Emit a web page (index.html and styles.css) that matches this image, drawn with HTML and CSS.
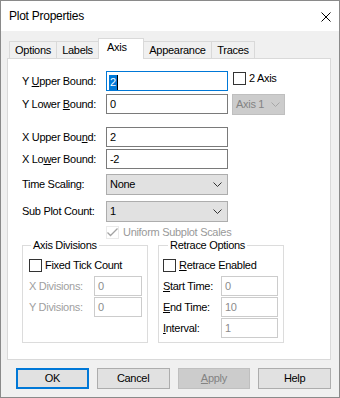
FILE: index.html
```html
<!DOCTYPE html>
<html lang="en">
<head>
  <meta charset="UTF-8">
  <meta name="viewport" content="width=device-width, initial-scale=1.0">
  <title>Plot Properties</title>
  <link rel="stylesheet" href="styles.css">
</head>
<body>
  <div class="window">
    <div class="titlebar">
      <span class="title">Plot Properties</span>
      <svg class="close" width="10" height="10" viewBox="0 0 10 10">
        <path d="M0.5 0.5 L9.5 9.5 M9.5 0.5 L0.5 9.5" stroke="#000" stroke-width="1" fill="none"/>
      </svg>
    </div>

    <div class="client">
      <div class="tabs">
        <div class="tab t-options">Options</div>
        <div class="tab t-labels">Labels</div>
        <div class="tab t-axis active">Axis</div>
        <div class="tab t-appearance">Appearance</div>
        <div class="tab t-traces">Traces</div>
      </div>

      <div class="panel">
        <div class="row">
          <span class="lbl">Y <u>U</u>pper Bound:</span>
          <div class="field focus"><span class="sel">2</span></div>
          <div class="check top"><span class="box"></span>2 Axis</div>
        </div>
        <div class="row r2">
          <span class="lbl">Y Lower <u>B</u>ound:</span>
          <div class="field">0</div>
          <div class="combo mini disabled">
            <span>Axis 1</span>
            <svg width="9" height="5" viewBox="0 0 9 5"><polyline points="0.5,0.5 4.5,4.5 8.5,0.5" fill="none" stroke="#a6a6a6"/></svg>
          </div>
        </div>
        <div class="row r3">
          <span class="lbl">X Upper Bou<u>n</u>d:</span>
          <div class="field">2</div>
        </div>
        <div class="row r4">
          <span class="lbl">X Lo<u>w</u>er Bound:</span>
          <div class="field">-2</div>
        </div>
        <div class="row r5">
          <span class="lbl">Time Scaling:</span>
          <div class="combo">
            <span>None</span>
            <svg width="9" height="5" viewBox="0 0 9 5"><polyline points="0.5,0.5 4.5,4.5 8.5,0.5" fill="none" stroke="#333"/></svg>
          </div>
        </div>
        <div class="row r6">
          <span class="lbl">Sub Plot Count:</span>
          <div class="combo">
            <span>1</span>
            <svg width="9" height="5" viewBox="0 0 9 5"><polyline points="0.5,0.5 4.5,4.5 8.5,0.5" fill="none" stroke="#333"/></svg>
          </div>
        </div>
        <div class="check uniform disabled">
          <span class="box">
            <svg width="13" height="13" viewBox="0 0 13 13"><polyline points="1.5,6.5 4.5,9.5 11.5,2.5" fill="none" stroke="#a3a3a3" stroke-width="1.3"/></svg>
          </span>Uniform Subplot Scales
        </div>

        <div class="groups">
          <fieldset class="group g-axis">
            <legend>Axis Divisions</legend>
            <div class="check"><span class="box"></span>Fixed Tick Count</div>
            <div class="grow first">
              <span class="glbl disabled">X Divisions:</span>
              <div class="field off">0</div>
            </div>
            <div class="grow">
              <span class="glbl disabled">Y Divisions:</span>
              <div class="field off">0</div>
            </div>
          </fieldset>
          <fieldset class="group g-retrace">
            <legend>Retrace Options</legend>
            <div class="check"><span class="box"></span><span><u>R</u>etrace Enabled</span></div>
            <div class="grow first">
              <span class="glbl"><u>S</u>tart Time:</span>
              <div class="field off">0</div>
            </div>
            <div class="grow">
              <span class="glbl"><u>E</u>nd Time:</span>
              <div class="field off">10</div>
            </div>
            <div class="grow">
              <span class="glbl"><u>I</u>nterval:</span>
              <div class="field off">1</div>
            </div>
          </fieldset>
        </div>
      </div>

      <div class="buttons">
        <div class="btn default">OK</div>
        <div class="btn">Cancel</div>
        <div class="btn disabled"><u>A</u>pply</div>
        <div class="btn">Help</div>
      </div>
    </div>
  </div>
</body>
</html>
```

FILE: styles.css
```css
* {
  box-sizing: border-box;
  margin: 0;
  padding: 0;
}

body {
  font-family: "Liberation Sans", Arial, sans-serif;
  font-size: 11px;
  line-height: 13px;
  letter-spacing: -0.3px;
  color: #000;
  background: #fff;
}

.window {
  width: 340px;
  height: 398px;
  border: 1px solid #8a8a8a;
  background: #f0f0f0;
}

/* title bar */
.titlebar {
  height: 30px;
  background: #fff;
  display: flex;
  align-items: center;
  justify-content: space-between;
  padding: 0 8px 0 8px;
}

.title {
  font-size: 12px;
  line-height: 14px;
  letter-spacing: -0.25px;
}

.close {
  display: block;
  margin-top: 1px;
}

.client {
  padding: 7px 8px 8px 6px;
}

/* tabs */
.tabs {
  display: flex;
  align-items: flex-end;
  height: 20px;
  margin-left: 2px;
}

.tab {
  height: 17px;
  border: 1px solid #d9d9d9;
  border-bottom: none;
  margin-right: -1px;
  padding-top: 2px;
  text-align: center;
  background: #f0f0f0;
}

.t-options { width: 48px; }
.t-labels { width: 43px; }
.t-axis { width: 46px; }
.t-appearance { width: 69px; }
.t-traces { width: 44px; }

.tab.active {
  height: 21px;
  margin-bottom: -1px;
  background: #fff;
  text-align: left;
  padding-left: 8px;
  position: relative;
  z-index: 1;
}

/* page */
.panel {
  height: 302px;
  background: #fff;
  border: 1px solid #d9d9d9;
  padding: 12px 0 0 14px;
}

.row {
  display: flex;
  align-items: center;
  height: 20px;
}

.r2 { margin-top: 3px; }
.r3 { margin-top: 13px; }
.r4 { margin-top: 2px; }
.r5 { margin-top: 5px; height: 21px; }
.r6 { margin-top: 6px; height: 21px; }

.lbl {
  width: 84px;
  flex: none;
}

.field {
  width: 122px;
  height: 20px;
  border: 1px solid #7a7a7a;
  background: #fff;
  padding-left: 3px;
  line-height: 18px;
  flex: none;
}

.field.focus {
  border-color: #0078d7;
  padding: 1px 0 0 2px;
}

.sel {
  display: inline-block;
  height: 15px;
  line-height: 15px;
  padding: 0 1px;
  background: #0078d7;
  color: #fff;
  border-right: 1px solid #000;
}

.field.off {
  border-color: #cccccc;
  color: #8c8c8c;
}

.combo {
  width: 122px;
  height: 21px;
  border: 1px solid #adadad;
  background: #e1e1e1;
  display: flex;
  align-items: center;
  justify-content: space-between;
  padding: 0 5px 0 3px;
  flex: none;
}

.combo svg {
  display: block;
}

.combo.mini {
  width: 53px;
  margin-left: 4px;
  padding-right: 4px;
}

.combo.disabled {
  background: #cccccc;
  border-color: #bfbfbf;
  color: #838383;
}

/* check boxes */
.check {
  display: flex;
  align-items: center;
  height: 13px;
}

.check .box {
  width: 13px;
  height: 13px;
  border: 1px solid #333;
  background: #fff;
  margin-right: 3px;
  flex: none;
  display: flex;
  align-items: center;
  justify-content: center;
}

.check.top {
  align-self: flex-start;
  margin: 1px 0 0 5px;
}

.check.uniform {
  margin: 4px 0 0 84px;
}

.check.uniform .box {
  border-color: #eaeaea;
  margin-right: 4px;
}

.check.uniform .box svg {
  display: block;
  margin: -1px;
}

.disabled {
  color: #a0a0a0;
}

.check.uniform.disabled {
  color: #999;
}

/* group boxes */
.groups {
  display: flex;
  gap: 10px;
}

.group {
  width: 126px;
  height: 104px;
  border: 1px solid #dcdcdc;
  padding: 0 0 0 6px;
}

.group legend {
  padding: 0 2px;
  margin-left: 2px;
  line-height: 13px;
}

.g-retrace {
  padding-left: 4px;
}

.g-retrace legend {
  margin-left: 5px;
}

.group .check {
  margin-top: 7px;
}

.grow {
  display: flex;
  align-items: center;
  margin-top: 1px;
}

.grow.first {
  margin-top: 4px;
}

.glbl {
  width: 65px;
  flex: none;
}

.g-axis .field {
  width: 48px;
}

.g-retrace .glbl {
  width: 58px;
}

.g-retrace .field {
  width: 57px;
}

/* buttons */
.buttons {
  display: flex;
  gap: 8px;
  margin: 8px 0 0 9px;
}

.btn {
  width: 73px;
  height: 21px;
  border: 1px solid #adadad;
  background: #e1e1e1;
  text-align: center;
  line-height: 19px;
}

.btn.default {
  border: 2px solid #0078d7;
  line-height: 17px;
}

.btn.disabled {
  background: #cccccc;
  border-color: #bfbfbf;
  color: #838383;
}
```
